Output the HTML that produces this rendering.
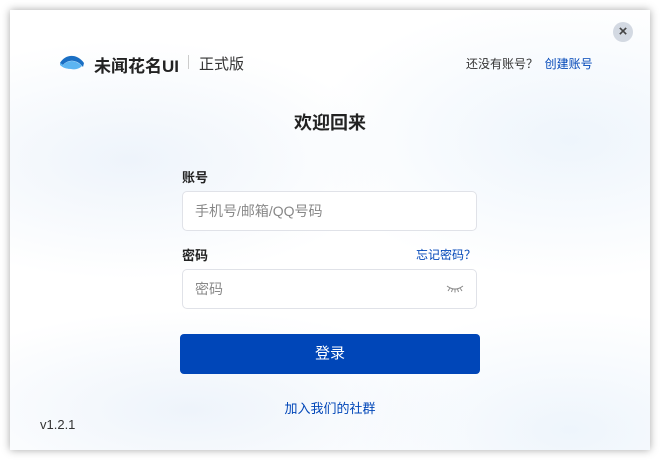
<!DOCTYPE html>
<html><head><meta charset="utf-8"><style>
html,body{margin:0;width:660px;height:460px;background:#fff;overflow:hidden;font-family:"Liberation Sans","Noto Sans CJK SC",sans-serif;}
.card{position:absolute;left:10px;top:10px;width:640px;height:440px;background:#fff;box-shadow:0 0 8px rgba(0,0,0,0.35);overflow:hidden;
background:radial-gradient(ellipse 260px 120px at 120px 150px,#eef4fb 0%,rgba(255,255,255,0) 100%),radial-gradient(ellipse 260px 140px at 560px 130px,#eef5fc 0%,rgba(255,255,255,0) 100%),radial-gradient(ellipse 280px 100px at 180px 400px,#eef4fb 0%,rgba(255,255,255,0) 100%),radial-gradient(ellipse 240px 120px at 560px 420px,#eef5fc 0%,rgba(255,255,255,0) 100%),#fff;}
.abs{position:absolute;}
.close{left:603px;top:12px;width:20px;height:20px;border-radius:50%;background:#d3d9e2;color:#444;font-size:15px;line-height:20px;text-align:center;font-weight:bold}
.brand{left:84px;top:42px;font-size:17px;font-weight:bold;color:#222}
.sep{left:178px;top:45px;width:1px;height:14px;background:#ccc}
.ver{left:189px;top:43px;font-size:15px;color:#333}
.top{left:456px;top:45px;font-size:12px;color:#333}
.blue{color:#0046b8}
.title{left:0;width:640px;text-align:center;top:99px;font-size:18px;font-weight:bold;color:#222}
.lbl{font-size:13px;font-weight:bold;color:#222}
.inp{left:172px;width:293px;height:38px;border:1px solid #e0e2e8;border-radius:5px;background:#fff;font-size:14px;color:#888;line-height:38px;text-indent:12px;box-sizing:content-box}
.btn{left:170px;top:324px;width:300px;height:40px;background:#0046b8;border-radius:4px;color:#fff;font-size:15px;text-align:center;line-height:40px}
</style></head><body>
<div class="card">
<div class="abs close">×</div>
<svg class="abs" style="left:49px;top:43px" width="26" height="18" viewBox="0 0 26 18"><path d="M1 10 C6 1,18 0,25 10 L24 14 C18 6,9 6,4 12 Z" fill="#1a6fc4"/><path d="M1 10 L4 12 C7 15,10 16,12 16 C8 16,4 15,1 12 Z" fill="#5cb5f2"/><path d="M4 12 C9 7,16 6,23 13 C20 16,16 17,12 16 C8 16,6 14,4 12Z" fill="#5cb5f2"/></svg>
<div class="abs brand">未闻花名UI</div>
<div class="abs sep"></div>
<div class="abs ver">正式版</div>
<div class="abs top">还没有账号？ <span class="blue">&nbsp;创建账号</span></div>
<div class="abs title">欢迎回来</div>
<div class="abs lbl" style="left:172px;top:157px">账号</div>
<div class="abs inp" style="top:181px">手机号/邮箱/QQ号码</div>
<div class="abs lbl" style="left:172px;top:235px">密码</div>
<div class="abs blue" style="left:406px;top:236px;font-size:12px">忘记密码？</div>
<div class="abs inp" style="top:259px">密码</div>
<svg class="abs" style="left:436px;top:275px" width="18" height="8" viewBox="0 0 18 8"><path d="M1 1 Q9 7 17 1 M4 3 L2 6 M9 4.5 V7.5 M14 3 L16 6 M6.5 4 L5.5 7 M11.5 4 L12.5 7" stroke="#888" stroke-width="1" fill="none"/></svg>
<div class="abs btn">登录</div>
<div class="abs blue" style="left:0;width:640px;text-align:center;top:388px;font-size:13px">加入我们的社群</div>
<div class="abs" style="left:30px;top:407px;font-size:13px;color:#333">v1.2.1</div>
</div>
</body></html>
